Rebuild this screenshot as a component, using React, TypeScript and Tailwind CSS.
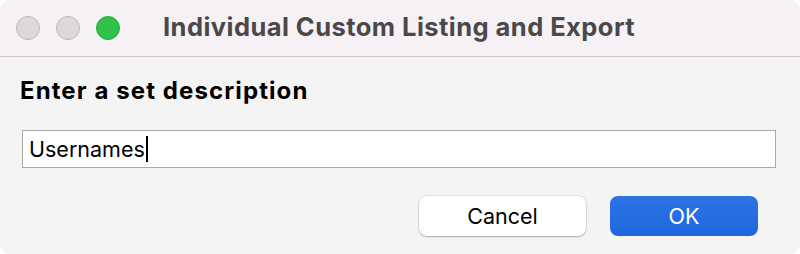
export default function App() {
  return (
    <div className="h-[254px] w-[800px] bg-white font-['Inter','Liberation_Sans',Arial,sans-serif]">
      <div className="flex h-full w-full flex-col overflow-hidden rounded-[11px] bg-[#f4f4f4]">
        {/* Title bar */}
        <div className="flex h-[57px] shrink-0 items-center border-b border-[#c9c7c9] bg-[#f6f1f4]">
          <div className="flex items-center gap-4 pl-4">
            <span className="h-6 w-6 rounded-full border border-[#bdb9bd] bg-[#dcd8dc]" />
            <span className="h-6 w-6 rounded-full border border-[#bdb9bd] bg-[#dcd8dc]" />
            <span className="h-6 w-6 rounded-full border border-[#2aa944] bg-[#30c04c]" />
          </div>
          <div className="-mt-[3px] ml-[43px] text-[25.5px] font-bold leading-[30px] tracking-[0.45px] text-[#4a4849]">
            Individual Custom Listing and Export
          </div>
        </div>

        {/* Body */}
        <div className="flex flex-1 flex-col px-5 pt-[19px]">
          <h1 className="text-[24px] font-bold leading-[30px] tracking-[1.1px] text-black">
            Enter a set description
          </h1>
          <div className="ml-[2px] mt-[24px] flex h-[38px] w-[754px] items-center border border-[#a9a9a9] bg-white pl-[6px]">
            <span className="text-[21.5px] text-black">Usernames</span>
            <span className="ml-[1px] h-[26px] w-[2px] bg-black" />
          </div>
          <div className="mt-[28px] flex justify-end gap-6 pr-[22px]">
            <button className="h-[40px] w-[167px] rounded-[8px] bg-white text-[21.5px] text-black shadow-[0_0_0_0.5px_rgba(0,0,0,0.15),0_1px_1.5px_rgba(0,0,0,0.25)]">
              Cancel
            </button>
            <button className="h-[40px] w-[148px] rounded-[8px] bg-gradient-to-b from-[#2c74e3] to-[#1f67e0] text-[21.5px] text-white">
              OK
            </button>
          </div>
        </div>
      </div>
    </div>
  );
}
